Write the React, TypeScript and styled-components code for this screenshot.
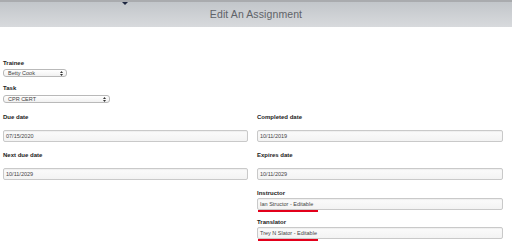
import React from "react";
import styled, { createGlobalStyle } from "styled-components";

const Global = createGlobalStyle`
  html, body { margin: 0; padding: 0; background: #ffffff; }
  body { font-family: "Liberation Sans", Arial, sans-serif; width: 512px; height: 246px; overflow: hidden; }
  * { box-sizing: border-box; }
`;

const Header = styled.header`
  position: relative;
  height: 27px;
  border-top: 2px solid #a9abae;
  background: linear-gradient(#c2c6ca, #d8dadd);
  display: flex;
  align-items: center;
  justify-content: center;
`;

const Notch = styled.span`
  position: absolute;
  left: 122px;
  top: 0;
  width: 0;
  height: 0;
  border-left: 3px solid transparent;
  border-right: 3px solid transparent;
  border-top: 3px solid #1d2640;
`;

const Title = styled.h1`
  margin: 0 0 1px 0;
  font-family: "Liberation Sans", Arial, sans-serif;
  font-weight: 400;
  font-size: 10.5px;
  letter-spacing: 0.1px;
  color: #606368;
`;

const Body = styled.main`
  padding: 32px 9px 0 3px;
  display: flex;
  flex-direction: column;
`;

const Field = styled.div<{ $gap: number; $mt?: number }>`
  display: flex;
  flex-direction: column;
  gap: ${(p) => p.$gap}px;
  margin-top: ${(p) => p.$mt ?? 0}px;
`;

const Label = styled.label`
  display: block;
  height: 8px;
  line-height: 8px;
  font-size: 6px;
  font-weight: 700;
  color: #222;
`;

const SelectBox = styled.div<{ $w: number }>`
  width: ${(p) => p.$w}px;
  height: 8px;
  border: 1px solid #b9b9b9;
  border-radius: 3px;
  background: linear-gradient(#ffffff, #f1f1f1);
  display: flex;
  align-items: center;
  justify-content: space-between;
  padding: 0 3px 0 4px;
  font-size: 5.5px;
  color: #444;
  line-height: 6px;
`;

const Grid = styled.div`
  margin-top: 10px;
  display: grid;
  grid-template-columns: 245px 246px;
  column-gap: 9px;
  row-gap: 9px;
`;

const RightStack = styled.div`
  grid-column: 2;
  display: flex;
  flex-direction: column;
  gap: 8px;
`;

const Input = styled.div`
  position: relative;
  height: 12px;
  border: 1px solid #c9c9c9;
  border-radius: 2px;
  background: linear-gradient(#fbfbfb, #f3f3f3);
  box-shadow: inset 0 1px 1px rgba(0, 0, 0, 0.05);
  display: flex;
  align-items: center;
  padding: 0 2px;
  font-size: 5.5px;
  color: #444;
`;

const Mark = styled.span`
  position: absolute;
  left: 0;
  bottom: -3px;
  width: 60px;
  height: 2px;
  background: #e3001b;
`;

const Arrows = () => (
  <svg width="3" height="5" viewBox="0 0 3 5">
    <path d="M0 2 L1.5 0 L3 2 Z M0 3 L1.5 5 L3 3 Z" fill="#333" />
  </svg>
);

export default function App() {
  return (
    <>
      <Global />
      <Header>
        <Notch />
        <Title>Edit An Assignment</Title>
      </Header>
      <Body>
        <Field $gap={2}>
          <Label>Trainee</Label>
          <SelectBox $w={64}>
            <span>Betty Cook</span>
            <Arrows />
          </SelectBox>
        </Field>
        <Field $gap={3} $mt={7}>
          <Label>Task</Label>
          <SelectBox $w={107}>
            <span>CPR CERT</span>
            <Arrows />
          </SelectBox>
        </Field>
        <Grid>
          <Field $gap={9}>
            <Label>Due date</Label>
            <Input>07/15/2020</Input>
          </Field>
          <Field $gap={9}>
            <Label>Completed date</Label>
            <Input>10/11/2019</Input>
          </Field>
          <Field $gap={9}>
            <Label>Next due date</Label>
            <Input>10/11/2029</Input>
          </Field>
          <Field $gap={9}>
            <Label>Expires date</Label>
            <Input>10/11/2029</Input>
          </Field>
          <RightStack>
            <Field $gap={1}>
              <Label>Instructor</Label>
              <Input>
                Ian Structor - Editable
                <Mark />
              </Input>
            </Field>
            <Field $gap={1}>
              <Label>Translator</Label>
              <Input>
                Trey N Slator - Editable
                <Mark />
              </Input>
            </Field>
          </RightStack>
        </Grid>
      </Body>
    </>
  );
}
